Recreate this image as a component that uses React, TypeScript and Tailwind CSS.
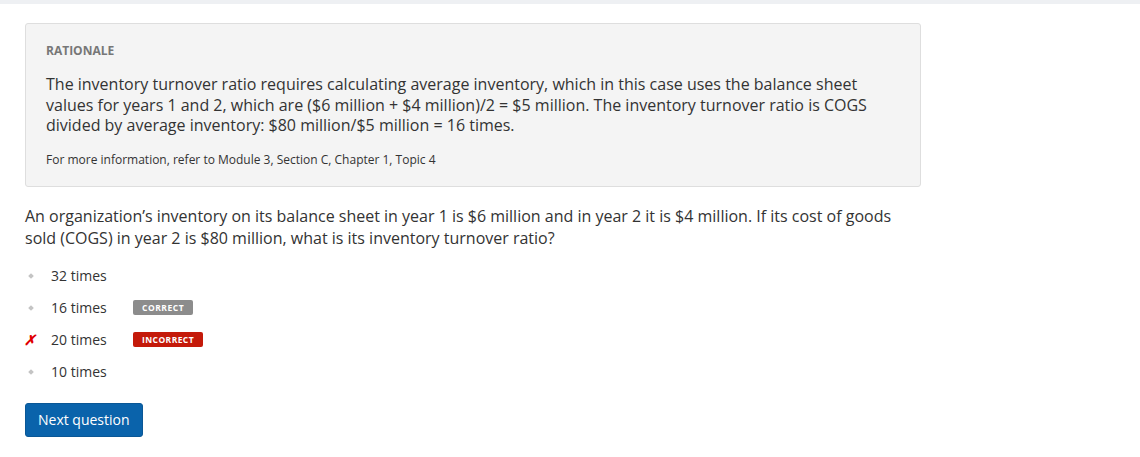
export default function App() {
  const options = [
    { label: "32 times" },
    { label: "16 times", badge: "correct" as const },
    { label: "20 times", badge: "incorrect" as const, wrong: true },
    { label: "10 times" },
  ];

  return (
    <div className="min-h-[457px] bg-white font-['Open_Sans',sans-serif] text-[#333]">
      <div className="h-[4px] bg-[#eef0f3]" />
      <div className="px-[25px] pt-[19px]">
        {/* Rationale */}
        <div className="w-[896px] rounded-[3px] border border-[#dedede] bg-[#f4f4f4] px-[20px] pt-[19px] pb-[18px]">
          <div className="text-[12px] font-bold leading-[16px] text-[#777]">RATIONALE</div>
          <p className="mt-[15px] text-[16px] leading-[20.5px] text-[#333]">
            The inventory turnover ratio requires calculating average inventory, which in this case uses the balance sheet
            values for years 1 and 2, which are ($6 million + $4 million)/2 = $5 million. The inventory turnover ratio is COGS
            divided by average inventory: $80 million/$5 million = 16 times.
          </p>
          <p className="mt-[16px] text-[12px] leading-[16px] text-[#333]">
            For more information, refer to Module 3, Section C, Chapter 1, Topic 4
          </p>
        </div>

        {/* Question */}
        <p className="mt-[18px] w-[900px] text-[16px] leading-[22px] text-[#333]">
          An organization’s inventory on its balance sheet in year 1 is $6 million and in year 2 it is $4 million. If its cost of goods
          sold (COGS) in year 2 is $80 million, what is its inventory turnover ratio?
        </p>

        <ul className="mt-[11px] flex flex-col">
          {options.map((o) => (
            <li key={o.label} className="flex h-[32px] items-center">
              <span className="flex w-[26px] items-center justify-start">
                {o.wrong ? (
                  <span className="ml-[-1px] text-[14px] font-bold italic leading-none text-[#e00000]">✗</span>
                ) : (
                  <span className="ml-[4px] block h-[4px] w-[4px] rotate-45 bg-[#c4c4c4]" />
                )}
              </span>
              <span className="w-[82px] text-[14px] leading-[20px] text-[#333]">{o.label}</span>
              {o.badge === "correct" && (
                <span className="rounded-[2px] bg-[#8c8c8c] px-[9px] text-[8.5px] font-bold leading-[15px] tracking-[0.06em] text-white">
                  CORRECT
                </span>
              )}
              {o.badge === "incorrect" && (
                <span className="rounded-[2px] bg-[#c41a0a] px-[9px] text-[8.5px] font-bold leading-[15px] tracking-[0.05em] text-white">
                  INCORRECT
                </span>
              )}
            </li>
          ))}
        </ul>

        <button className="mt-[15px] h-[34px] rounded-[3px] border border-[#0a5796] bg-[#0a63ab] px-[12px] text-[14px] leading-[20px] text-white">
          Next question
        </button>
      </div>
    </div>
  );
}
